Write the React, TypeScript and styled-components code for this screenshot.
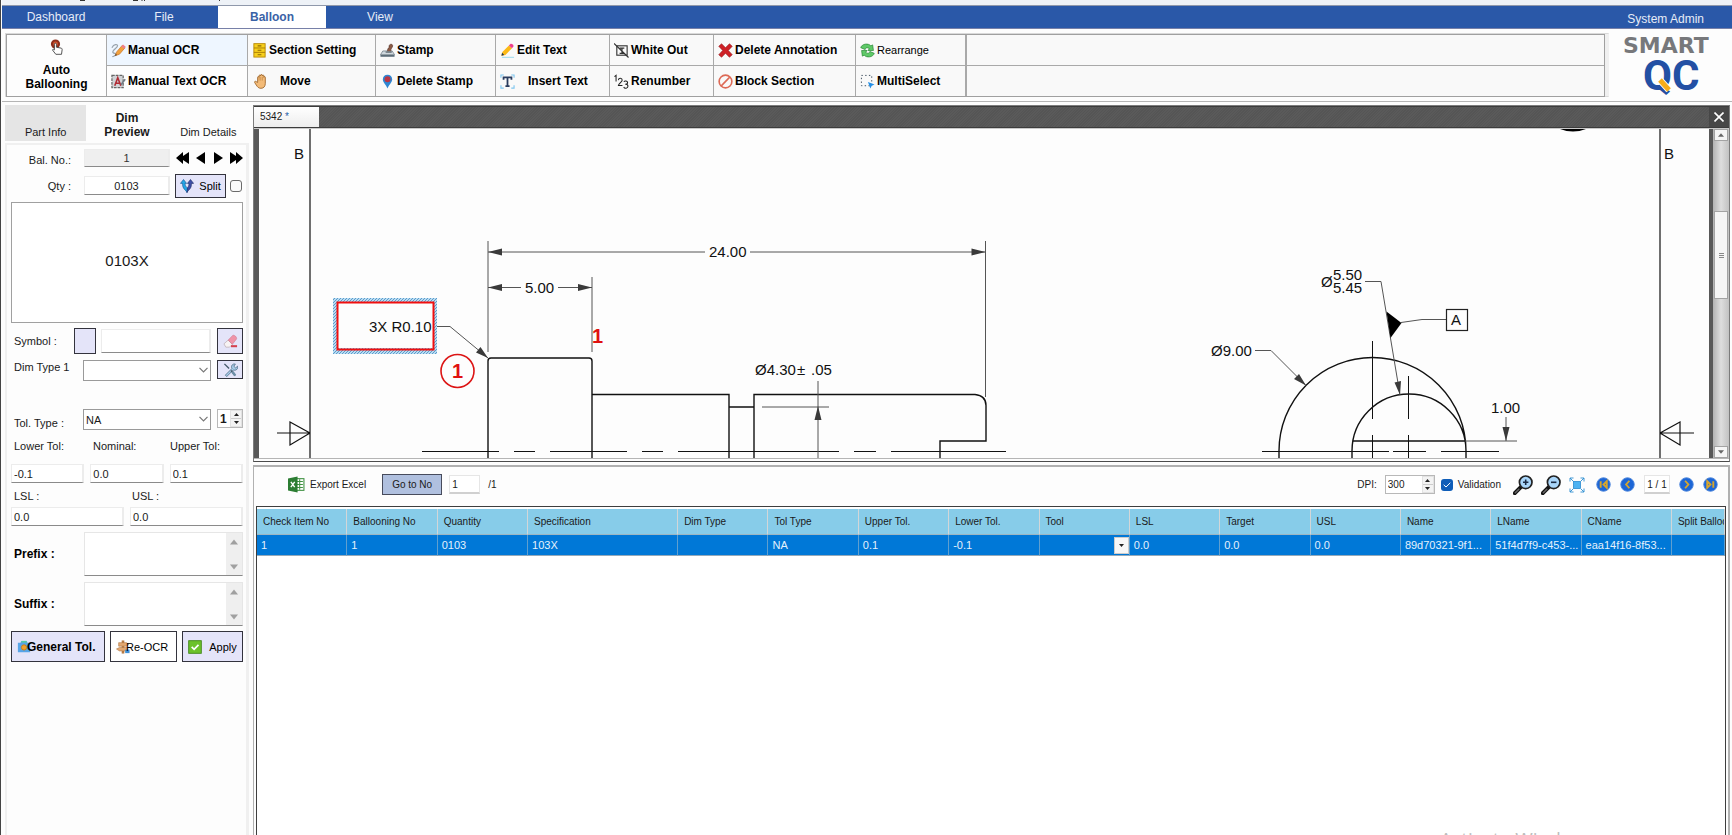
import React from 'react';
import styled, { createGlobalStyle, css } from 'styled-components';

const Global = createGlobalStyle`
  * { box-sizing: border-box; }
  body { margin: 0; background: #fff; font-family: "Liberation Sans", Arial, sans-serif; font-size: 11px; color: #1a1a1a; }
  button, input, select, textarea { font: inherit; color: inherit; margin: 0; padding: 0; border-radius: 0; }
  svg { display: block; flex: none; }
`;

const small = css`font-size: 10px;`;

/* ---------- shell ---------- */
const Page = styled.div`
  position: relative; display: flex; flex-direction: column; height: 100vh; min-height: 700px;
  overflow: hidden; border-left: 1px solid #444; padding-left: 1px; background: #fdfdfd;
`;
const TitleStrip = styled.div`height: 6px; flex: none; background: #eef2f7; border-bottom: 1px solid #8f98ab;`;
const MenuBar = styled.nav`
  display: flex; height: 23px; flex: none; background: #2a58a8; border-bottom: 1px solid #7780a8; color: #e6ecf7; font-size: 12px;
`;
const MenuTab = styled.button<{ $active?: boolean }>`
  width: 108px; border: 0; background: ${p => (p.$active ? '#fff' : 'transparent')};
  color: ${p => (p.$active ? '#3a62a6' : 'inherit')}; font-weight: ${p => (p.$active ? 700 : 400)};
`;
const UserName = styled.span`margin-left: auto; padding-right: 28px; line-height: 26px;`;

/* ---------- ribbon ---------- */
const Ribbon = styled.header`
  display: flex; flex: none; height: 73px; border-bottom: 1px solid #b5b5b5; padding: 4px 0 4px 3px; background: #fdfdfd;
`;
const RibbonFrame = styled.div`
  flex: 1; display: flex; border: 1px solid #d9d9d9; border-right-color: #f0f0f0; background: #f0f0f0; padding-right: 3px;
`;
const RibbonGrid = styled.div`
  flex: 1; display: grid; height: 63px; background: #a9a9a9; border: 1px solid #a0a0a0; gap: 1px;
  grid-template-columns: 99px 140px 127px 119px 113px 103px 141px 109px 1fr;
  grid-template-rows: 30px 30px; grid-auto-flow: column;
`;
const RibbonButton = styled.button<{ $wide?: boolean; $bg?: string; $plain?: boolean }>`
  display: flex; align-items: center; gap: ${p => (p.$wide ? '13px' : '2px')}; padding: 0 0 0 4px; border: 0;
  background: ${p => p.$bg ?? '#f9f9f9'}; color: #000; white-space: nowrap;
  font-size: ${p => (p.$plain ? '11px' : '12px')}; font-weight: ${p => (p.$plain ? 400 : 700)};
`;
const AutoButton = styled(RibbonButton)`
  grid-row: span 2; flex-direction: column; justify-content: center; padding: 0 0 2px; gap: 8px; line-height: 14px;
`;
const RibbonFiller = styled.div`background: #f9f9f9; border-left: 1px solid #a9a9a9;`;
const Brand = styled.div`width: 123px; padding-left: 10px;`;

/* ---------- workspace ---------- */
const Workspace = styled.main`flex: 1; display: flex; min-height: 0; padding-top: 3px;`;
const Side = styled.aside`width: 251px; flex: none; display: flex; flex-direction: column; padding: 0 4px 0 3px;`;
const SideTabs = styled.div`display: flex; height: 36px; flex: none;`;
const SideTab = styled.button<{ $active?: boolean; $shade?: boolean }>`
  flex: 1; min-width: 0; display: flex; align-items: flex-end; justify-content: center; padding: 0 0 2px; border: 0;
  line-height: 14px; white-space: nowrap; background: ${p => (p.$shade ? '#e5e5e5' : 'transparent')};
  font-weight: ${p => (p.$active ? 700 : 400)}; font-size: ${p => (p.$active ? '12px' : '11px')};
`;
const Form = styled.form`
  flex: 1; margin-top: 2px; padding: 4px 3px 0 4px; border: solid #f0f0f0; border-width: 2px 3px 0 2px;
`;
const Row = styled.div<{ $h: number; $top?: number; $gap?: number }>`
  display: flex; align-items: stretch; height: ${p => p.$h}px; margin-top: ${p => p.$top ?? 0}px; gap: ${p => p.$gap ?? 0}px;
`;
const Label = styled.label<{ $w?: number; $right?: boolean; $bold?: boolean; $align?: string }>`
  flex: none; width: ${p => p.$w ?? 73}px; padding: 0 ${p => (p.$right ? 13 : 0)}px 0 3px; align-self: ${p => p.$align ?? 'center'};
  text-align: ${p => (p.$right ? 'right' : 'left')}; line-height: 14px; white-space: nowrap;
  ${p => p.$bold && 'font-weight: 700; font-size: 12px; color: #000;'}
`;
const Field = styled.input<{ $w?: number; $center?: boolean }>`
  width: ${p => (p.$w ? `${p.$w}px` : 'auto')}; ${p => !p.$w && 'flex: 1; min-width: 0;'}
  height: 100%; padding: 0 2px; border: 2px solid #ececec; border-width: 1px 2px 1px 1px; border-bottom-color: #8a8a8a;
  background: #fff; text-align: ${p => (p.$center ? 'center' : 'left')};
  &:disabled { background: #efefef; color: #333; }
`;
const LavButton = styled.button<{ $w?: number; $bg?: string; $bold?: boolean; $gap?: number; $tuck?: boolean }>`
  display: flex; align-items: center; justify-content: center; gap: ${p => p.$gap ?? 0}px;
  width: ${p => (p.$w ? `${p.$w}px` : 'auto')}; flex: none; border: 1px solid #33333d; background: ${p => p.$bg ?? '#e4e4f9'};
  white-space: nowrap; color: #000; ${p => p.$bold && 'font-weight: 700; font-size: 12px;'}
  ${p => p.$tuck && 'justify-content: flex-start; padding-left: 5px; svg { margin-right: -4px; } span { position: relative; }'}
`;
const NavGroup = styled.div`flex: 1; display: flex; justify-content: space-between; align-items: center; padding-left: 6px;`;
const BareButton = styled.button`border: 0; background: none; padding: 0; display: flex;`;
const Tick = styled.input`
  appearance: none; width: 12px; height: 12px; margin: auto 1px auto auto; border: 1px solid #6b6b6b; border-radius: 3px; background: #fafafa;
`;
const Preview = styled.output`
  display: flex; align-items: center; justify-content: center; height: 121px; margin-top: 4px; border: 1px solid #a0a0a0;
  background: #fff; font-size: 15px; padding-bottom: 4px;
`;
const SelectBox = styled.div`
  position: relative; width: 128px; margin-right: 6px;
  select { appearance: none; width: 100%; height: 100%; border: 1px solid #9a9a9a; background: #fff; padding-left: 2px; }
  svg { position: absolute; right: 3px; top: 7px; pointer-events: none; }
`;
const Spinner = styled.div<{ $w: number; $bold?: boolean }>`
  display: flex; width: ${p => p.$w}px; height: 19px; border: 1px solid #b8b8b8; background: #fff;
  input { flex: 1; min-width: 0; border: 0; background: none; padding-left: 2px; ${p => p.$bold && 'font-weight: 700; font-size: 12px;'} }
`;
const Steps = styled.span`
  display: flex; flex-direction: column; gap: 1px; width: 12px; background: #ccc; border: 1px solid #e2e2e2;
  button { flex: 1; display: flex; align-items: center; justify-content: center; border: 0; background: #f3f3f3; }
`;
const Memo = styled.div`
  flex: 1; display: flex; border: 1px solid #e6e6e6; border-bottom-color: #8a8a8a; background: #fff;
  textarea { flex: 1; min-width: 0; border: 0; resize: none; background: none; overflow: hidden; }
`;
const MemoBar = styled.span`
  width: 16px; display: flex; flex-direction: column; justify-content: space-between; align-items: center; padding: 6px 0 5px; background: #efefef;
`;

const Content = styled.div`flex: 1; min-width: 0; display: flex; flex-direction: column; padding-right: 2px;`;
const Viewer = styled.section`flex: none; border: 1px solid #7c7c7c; border-bottom-color: #4c4c4c;`;
const DocBar = styled.div`
  display: flex; height: 22px; border-top: 1px solid #3c3c3c; border-bottom: 1px solid #3c3c3c;
  background: repeating-linear-gradient(135deg, #555 0 1px, #5a5a5a 1px 2px);
`;
const DocTab = styled.button`
  width: 65px; border: 0; background: linear-gradient(#fff, #ededed); padding: 0 0 1px 6px; text-align: left; ${small}
  i { font-style: normal; color: #1f5fa8; }
`;
const CloseButton = styled.button`margin-left: auto; width: 20px; display: flex; align-items: center; justify-content: center; border: 0; background: #474747;`;
const SheetRow = styled.div`display: flex; height: 331px; border-top: 1px solid #c9c9c9; border-bottom: 1px solid #b5b5b5; margin-bottom: 2px;`;
const SheetEdge = styled.div<{ $w: number }>`width: ${p => p.$w}px; flex: none; background: #585858;`;
const Sheet = styled.div`flex: 1; min-width: 0; overflow: hidden; svg { width: 100%; height: 329px; }`;
const VScroll = styled.div`
  width: 16px; flex: none; display: flex; flex-direction: column; justify-content: space-between; padding: 0 1px;
  background: linear-gradient(90deg, #b2b2b2, #dedede 50%, #c2c2c2);
`;
const ScrollPart = styled.div<{ $h: number }>`
  height: ${p => p.$h}px; display: flex; align-items: center; justify-content: center; border: 1px solid #a3a3a3; background: #f5f5f5;
`;
const ScrollTrack = styled.div`flex: 1; padding-top: 70px;`;

const Results = styled.section`flex: 1; min-height: 0; display: flex; flex-direction: column; margin-top: 3px; border: 2px solid #b1b1b1; border-width: 2px 2px 0 1px;`;
const ResultBar = styled.div`display: flex; align-items: center; height: 39px; flex: none; padding: 0 10px 4px 34px; ${small}`;
const ExportButton = styled(BareButton)`align-items: center; gap: 5px; margin-right: 16px;`;
const GoButton = styled.button`width: 60px; height: 21px; margin-right: 7px; border: 1px solid #474b5c; background: #b0c0df;`;
const SmallField = styled.input<{ $w: number; $center?: boolean }>`
  width: ${p => p.$w}px; height: 19px; padding: 0 2px; border: 1px solid #e6e6e6; border-bottom: 2px solid #d0d0d0; background: #fff;
  ${small} text-align: ${p => (p.$center ? 'center' : 'left')};
`;
const Total = styled.span`margin-left: 8px;`;
const RightTools = styled.div`margin-left: auto; display: flex; align-items: center;`;
const DpiLabel = styled.label`margin-right: 8px;`;
const Validation = styled.label`display: flex; align-items: center; gap: 5px; margin: 0 12px 0 6px;`;
const BlueTick = styled.span`
  position: relative; display: flex; width: 12px; height: 12px;
  input { appearance: none; width: 12px; height: 12px; border-radius: 3px; background: #0f5db8; }
  svg { position: absolute; left: 2px; top: 3px; pointer-events: none; }
`;
const Tools = styled.div`display: flex; align-items: center; gap: 8px;`;
const Pager = styled.div`display: flex; align-items: center; gap: 9px; margin-left: 11px;`;

const GridFrame = styled.div`
  flex: 1; min-height: 0; margin: 0 2px; border: 1px solid #3e3e3e; border-bottom: 0; padding-top: 2px; overflow: hidden; background: #fff;
`;
const Table = styled.table`
  width: 100%; table-layout: fixed; border-collapse: separate; border-spacing: 0; ${small} text-align: left;
  th, td { overflow: hidden; white-space: nowrap; text-overflow: ellipsis; padding: 0 0 0 6px; font-weight: 400; }
  th { height: 26px; background: #87cce9; border-right: 1px solid #d2d6d8; border-bottom: 1px solid #9db6c2; text-overflow: clip; }
  td { height: 21px; padding-left: 4px; background: #0078d7; color: #e4f1fc; border-right: 1px solid #5f9fcf; border-bottom: 1px solid #94a9ba; font-size: 11px; }
`;
const Col = styled.col<{ $w?: string }>`width: ${p => p.$w ?? '6.155%'};`;
const DropCell = styled.button`
  display: flex; align-items: center; justify-content: center; width: 15px; height: 17px; margin-left: auto; border: 1px solid #ccc; background: #f7f7f7;
`;
const Watermark = styled.div`
  position: absolute; right: 136px; bottom: -16px; font-family: "Open Sans", sans-serif; font-size: 19px; line-height: 24px; color: #bdbdbd; pointer-events: none;
`;

/* ---------- icons ---------- */
const Ico = ({ s = 15, children }: { s?: number; children: React.ReactNode }) => (
  <svg width={s} height={s} viewBox="0 0 16 16" fill="none" aria-hidden="true">{children}</svg>
);
const TapIcon = () => (
  <Ico s={16}>
    <circle cx="6.5" cy="5" r="4.6" fill="#8e2f1c" /><circle cx="6.5" cy="5" r="2.4" fill="#d9552f" />
    <path d="M5.4 5.2c0-1.4 2-1.4 2 0v3l4.6.9c1 .2 1.3.9 1.1 1.9l-.6 4.3H6.8L3.5 11c.2-1 1.200-.9 1.900-.1z" fill="#fff" stroke="#444" strokeWidth=".9" />
  </Ico>
);
const ScribbleIcon = () => (
  <Ico>
    <path d="M1 5c2-4 6-4 6-2S1 8 2 10s4 0 3.500 2S2 14 1.500 15" stroke="#9aa4ad" strokeWidth="1.300" />
    <path d="M4.500 13.500 6 9.500l6-7 3 2.500-6 7z" fill="#f2a13c" stroke="#c46f25" strokeWidth=".7" /><path d="m11 3.700 1.800-2.200 2.900 2.400-1.800 2.200z" fill="#ef7f8d" />
    <path d="m4.500 13.500.6-1.800 1.300 1z" fill="#333" />
  </Ico>
);
const TextScanIcon = () => (
  <Ico>
    <rect x="1" y="1.500" width="12" height="13" fill="#d0d3d6" stroke="#666" strokeWidth="1.300" strokeDasharray="3 1" />
    <path d="M4 12.500 7.200 4l3.300 8.500M5.300 9.800h4" stroke="#b02b34" strokeWidth="1.700" /><path d="m10 11 4.500-6 1.300 1-4.500 6z" fill="#707b84" />
  </Ico>
);
const CabinetIcon = () => (
  <Ico>
    <rect x="2" y=".7" width="12" height="14.300" fill="#f7cf1b" stroke="#b98b08" /><path d="M2 5.300h12M2 10h12" stroke="#a97d06" />
    <path d="M6 3h4M6 7.700h4M6 12.500h4" stroke="#8f6a05" strokeWidth="1.200" />
  </Ico>
);
const HandIcon = () => (
  <Ico>
    <path d="M4 9V3.500c0-1 1.500-1 1.500 0V2c0-1.200 1.700-1.200 1.700 0v-.6c0-1.200 1.800-1.200 1.800 0V2c0-1.100 1.700-1.100 1.700 0v1.500c0-1 1.500-1 1.500 0V10c0 3-1.500 5.300-4.700 5.300-2.500 0-3.700-1.600-5-3.600L.8 9c-.5-1 .8-1.700 1.600-.9z" transform="translate(2 0)" fill="#f3bb78" stroke="#9a6328" strokeWidth=".9" />
    <path d="M7.600 3.500V7M9.300 3v4M11.100 3v4" stroke="#b97f3d" strokeWidth=".6" />
  </Ico>
);
const StampIcon = () => (
  <Ico>
    <path d="M3 8.500h10l2.500 4H.5z" fill="#cfd8de" stroke="#6d7a84" strokeWidth=".8" />
    <path d="M8 9.500c0-3 .2-3.700 1.700-4.700C8.700 1 13.500 0 13.500 3c0 2.200-2.300 2.500-2 6.500z" fill="#8b5a45" stroke="#4c2a20" strokeWidth=".6" />
    <path d="M6 8.700h6.500v2H6z" fill="#7c868e" /><path d="M.5 13.700h15" stroke="#5c6c78" strokeWidth="2" />
  </Ico>
);
const PinIcon = () => (
  <Ico><path d="M8 .8c3 0 5 2.200 5 5C13 9 9 12 8 15.500 7 12 3 9 3 5.800c0-2.800 2-5 5-5z" fill="#2f86d2" /><circle cx="8" cy="5.600" r="3.200" fill="#b83646" /></Ico>
);
const PencilIcon = () => (
  <Ico>
    <path d="m1.500 13.500 1-4L9.500 2.700l3.300 3-7 7z" fill="#fbb917" /><path d="m9.500 2.700 1.300-1.500c1.500-1.300 4.600 1 3.300 2.900l-1.300 1.600z" fill="#ef3f8e" />
    <path d="m1.500 13.500.7-3 2.300 2.200z" fill="#1e3350" /><path d="M2 15.300h13" stroke="#a5dcee" strokeWidth="1.200" />
  </Ico>
);
const InsertTextIcon = () => (
  <Ico>
    <path d="M1 4V1h3M12 1h3v3M15 12v3h-3M4 15H1v-3" stroke="#7fc6ef" strokeWidth="1.200" />
    <path d="M3.800 6V3.500h8.400V6M8 3.500v9.300M5.800 13h4.400" stroke="#2a3c5f" strokeWidth="1.900" />
  </Ico>
);
const WhiteOutIcon = () => (
  <Ico><rect x="3" y="3" width="11" height="10" stroke="#333" strokeWidth="1.200" /><path d="M6 5.500h5M8.500 5.500V11M6 11h5M0 .5l15.500 15" stroke="#333" strokeWidth="1.300" /></Ico>
);
const NumberIcon = () => (
  <Ico s={15}>
    <path d="M.5 2.800 2.200 1.500V8M4.700 6.500C5 3.800 8.800 4 8.700 6.700 8.600 8.500 5 10 4.700 12.300H9M10.500 8.300c1-1.600 4-1 4 .8 0 1.300-1 1.900-2.500 1.900 1.700 0 2.900.7 2.900 2.100 0 2.300-3.700 2.800-4.500.8" stroke="#222" strokeWidth="1.100" />
  </Ico>
);
const CrossIcon = () => (
  <Ico><path d="m.8 3.500 3-2.700L8 5l4.200-4.200 3 2.700L11 7.900l4.200 4.600-3 2.700L8 10.900l-4.200 4.300-3-2.700L5 7.900z" fill="#cf2127" stroke="#8f1519" strokeWidth=".6" /></Ico>
);
const BlockIcon = () => <Ico><circle cx="8" cy="8" r="6.800" stroke="#dd6a56" strokeWidth="1.700" /><path d="m3.500 12.700 9-9.400" stroke="#dd6a56" strokeWidth="1.700" /></Ico>;
const RefreshIcon = () => (
  <Ico>
    <path d="M.8 5C2 .6 9 0 11.500 3l2-1 .8 6H8.500L10 6C7.500 4.300 6 5 5.500 7z" fill="#5fc968" stroke="#20802c" strokeWidth=".7" />
    <path d="M15.200 11C14 15.400 7 16 4.500 13l-2 1-.8-6h5.800L6 10c2.500 1.700 4 1 4.500-1z" fill="#5fc968" stroke="#20802c" strokeWidth=".7" />
  </Ico>
);
const MultiIcon = () => (
  <Ico><rect x="1.500" y="1.500" width="11" height="11" stroke="#3c4c5c" strokeDasharray="1.500 2.500" /><path d="m8.500 8.500 7 2.700-3 1.200L11 15.500z" fill="#2490e8" /></Ico>
);
const SplitIcon = () => (
  <Ico s={14}>
    <path d="M8 15.500C6.500 12 2.500 11.500 3 5H.5L4 .5 7.500 5H5.700c0 4 3 4.500 3 6z" fill="#24a6e6" stroke="#14538f" strokeWidth=".7" />
    <path d="M8 15.500C9.500 12 13.500 11.500 13 5h2.500L12 .5 8.500 5h1.800c0 3-1 4-1.800 5z" fill="#3d4fa8" stroke="#1c2a66" strokeWidth=".7" />
  </Ico>
);
const EraserIcon = () => (
  <Ico>
    <path d="m1 10.500 4.500-4 4.500 4.500-3 3H3z" fill="#f7f3f4" stroke="#b6a5ab" strokeWidth=".7" /><path d="M5.500 6.500 10.300 1.500c1.500-1 5.200 2 4 4L10 11z" fill="#ef93a8" stroke="#c76b80" strokeWidth=".5" /><path d="M8.500 13H15" stroke="#d5404e" strokeWidth="2.200" />
  </Ico>
);
const ToolsIcon = () => (
  <Ico>
    <path d="m2.500 14 7-7c-1.300-3 .8-5.500 3.700-4.800L11.500 4.500l2 1.800 2-1.800c.8 3-1.700 5-4.500 4l-7 7z" fill="#a8cbe8" stroke="#43627c" strokeWidth=".8" />
    <path d="m1.500 2 5 5M8.500 9l4.500 5.500" stroke="#46596a" strokeWidth="1.500" /><path d="m10 10.500 3 4" stroke="#6c8ea8" strokeWidth="2.600" />
  </Ico>
);
const Chevron = () => <svg width="9" height="6" viewBox="0 0 9 6" fill="none"><path d="m.5.8 4 4 4-4" stroke="#777" strokeWidth="1.200" /></svg>;
const Tri = ({ up, w = 5, h = 3, fill = '#222' }: { up?: boolean; w?: number; h?: number; fill?: string }) => (
  <svg width={w} height={h} viewBox="0 0 10 6"><path d={up ? 'M0 6 5 0l5 6z' : 'M0 0h10L5 6z'} fill={fill} /></svg>
);
const Arrow = ({ d, w }: { d: string; w: number }) => <svg width={w} height="12" viewBox={`0 0 ${w} 12`}><path d={d} fill="#000" /></svg>;
const BriefIcon = () => (
  <Ico s={14}><path d="M1 3h3l1-2h6l1 2h3v11H1z" fill="#57a5e8" /><path d="M5 1h6v2H5z" fill="#55c9a4" /><circle cx="8" cy="8.500" r="3" fill="#f0a22c" stroke="#c97a12" /></Ico>
);
const SignIcon = () => (
  <Ico s={14}><path d="M6.500 .5h3v15h-3z" fill="#b77b45" /><path d="M3 3h9l2.500 2L12 7H3zM13 8.500H4L.5 10.300 4 12.500h9z" fill="#e3a871" stroke="#a9703c" strokeWidth=".6" /><path d="M10.500 11h5v4h-5z" fill="#3e8fd6" /></Ico>
);
const CheckIcon = () => (
  <Ico s={14}><rect x=".8" y=".8" width="14.400" height="14.400" fill="#6cc22b" stroke="#3d8513" /><path d="m4.200 7.800 2.800 2.800 5-5" stroke="#fff" strokeWidth="2" /></Ico>
);
const ExcelIcon = () => (
  <Ico s={17}><rect x="7" y="2.500" width="8" height="11" fill="#fff" stroke="#3f9142" /><path d="M8 5.200h6M8 8h6M8 10.800h6M11 3v10" stroke="#3f9142" /><path d="M0 2.300 9 .5v15L0 13.700z" fill="#2c7d33" /><path d="m2.700 5.500 3.600 5M6.300 5.500l-3.600 5" stroke="#fff" strokeWidth="1.300" /></Ico>
);
const ZoomIcon = ({ plus }: { plus?: boolean }) => (
  <svg width="20" height="20" viewBox="0 0 20 20" fill="none">
    <path d="m1.800 18.200 6-6" stroke="#111" strokeWidth="4" strokeLinecap="round" /><path d="m2.300 17.700 3.500-3.500" stroke="#666" strokeWidth="1.500" strokeLinecap="round" />
    <circle cx="12.700" cy="7.300" r="6.300" fill="#a9d6fa" stroke="#222" strokeWidth="1.700" />
    <path d={plus ? 'M10 7.300h5.400M12.700 4.600V10' : 'M10 7.300h5.400'} stroke="#1b2b44" strokeWidth="1.600" />
  </svg>
);
const FitIcon = () => (
  <Ico s={16}><rect x="4.500" y="4.500" width="7" height="7" fill="#4db2f2" stroke="#2b8cd0" strokeWidth=".8" /><path d="M1 4.500V1h3.500M1 1l3 3M11.500 1H15v3.500M15 1l-3 3M15 11.500V15h-3.500M15 15l-3-3M4.500 15H1v-3.500M1 15l3-3" stroke="#2b8cd0" strokeWidth=".9" /></Ico>
);
const DiscIcon = ({ d }: { d: string }) => (
  <Ico s={15}><circle cx="8" cy="8" r="7.200" fill="#1d66d6" stroke="#4f88dc" /><path d={d} stroke="#d8a62c" strokeWidth="2" fill="none" /></Ico>
);

/* ---------- drawing ---------- */
const Drawing = () => (
  <svg viewBox="259 129 1451 329" preserveAspectRatio="xMinYMin slice" fill="none" fontFamily="Liberation Sans" fontSize="15">
    <defs>
      <pattern id="hatch" width="3" height="3" patternUnits="userSpaceOnUse"><rect width="3" height="3" fill="#b9dcf2" /><path d="M0 3 3 0" stroke="#5d9ccb" /></pattern>
    </defs>
    <path d="M1560 129q13 5 26 0z" fill="#000" />
    <g stroke="#111" strokeWidth="1.400">
      <path d="M310 129v329M1660 129v329M277 433h33l-20-11v23l20-12M1694 433h-34l20-11v23l-20-12" strokeWidth="1.200" />
      <path d="M488 458V361q0-3 3-3h98q3 0 3 3v97M592 394.500h137V458M729 407h25M754 458v-63.500h221q11 1 11 11V441h-46v17" />
      <path d="M1279 458v-7a93.500 93.500 0 0 1 187 0v7M1352 458v-7a57 57 0 0 1 114 0v7M1353 441h112" />
      <path d="M422 451.500h77M514 451.500h21M550 451.500h77M642 451.500h21M678 451.500h161M854 451.500h22M891 451.500h115M1262 451.500h127M1393 451.500h33M1441 451.500h58M1372.500 341v78M1372.500 435v23M1408.500 376v43M1408.500 435v23" strokeWidth="1" />
    </g>
    <g stroke="#555" strokeWidth="1">
      <path d="M488 241v111M985.500 241v156M592 277v75M488 252h217M750 252h235M488 287.500h33M558 287.500h34M434 326.500h16l38 31.500M762 407h67M818 381v77" />
      <path d="M1255 350.500h16l35 35M1365 281.500h16l19 113.500M1465 441h52M1506 417v24M1401 322.500l21-3h24" />
      <rect x="1446.500" y="309.500" width="21" height="21" stroke="#222" strokeWidth="1.200" />
    </g>
    <g fill="#3a3a3a">
      <path d="m488 252 14-3.500v7zM985.500 252l-14-3.500v7zM488 287.500l14-3.500v7zM592 287.500l-14-3.500v7zM488 358l-12-5.500 4.500-5.500zM818 406l-3.500 14h7zM1506 441l-3.500-14h7zM1306 385.500l-12-6.500 5-5zM1400 395l-5.500-12.500 6.500-1.500z" />
      <path d="m1386.500 311.500 15 11.500-11 15z" fill="#000" />
    </g>
    <path d="M333 298h104v56H333zm5 5v45h95v-45z" fill="url(#hatch)" fillRule="evenodd" />
    <rect x="337.500" y="302.500" width="96" height="47" stroke="#f10f0f" strokeWidth="2" />
    <circle cx="457.500" cy="371" r="16.500" stroke="#dc1414" strokeWidth="1.600" />
    <g fill="#e01010" fontWeight="700" fontSize="20"><text x="452" y="378">1</text><text x="592" y="343">1</text></g>
    <g fill="#111">
      <text x="294" y="159">B</text><text x="1664" y="159">B</text>
      <text x="709" y="257">24.00</text><text x="525" y="293">5.00</text><text x="369" y="332">3X R0.10</text>
      <text x="755" y="375">Ø4.30</text><text x="797" y="375">±</text><text x="811" y="375">.05</text>
      <text x="1211" y="356">Ø9.00</text><text x="1321" y="287">Ø</text>
      <text x="1333" y="280">5.50</text><text x="1333" y="293">5.45</text><text x="1451" y="325">A</text><text x="1491" y="413">1.00</text>
    </g>
  </svg>
);

const columns = ['Check Item No', 'Ballooning No', 'Quantity', 'Specification', 'Dim Type', 'Tol Type', 'Upper Tol.', 'Lower Tol.', 'Tool', 'LSL', 'Target', 'USL', 'Name', 'LName', 'CName', 'Split Balloon'];
const values = ['1', '1', '0103', '103X', '', 'NA', '0.1', '-0.1', null, '0.0', '0.0', '0.0', '89d70321-9f1...', '51f4d7f9-c453-...', 'eaa14f16-8f53...', ''];

const StepButtons = () => (
  <Steps><button type="button" aria-label="Increase"><Tri up /></button><button type="button" aria-label="Decrease"><Tri /></button></Steps>
);
const MemoField = ({ id }: { id: string }) => (
  <Memo><textarea id={id} /><MemoBar><Tri up w={8} h={6} fill="#a0a0a0" /><Tri w={8} h={6} fill="#a0a0a0" /></MemoBar></Memo>
);

export default function App() {
  return (
    <Page>
      <Global />
      <TitleStrip>
        <svg width="230" height="4" fill="none" stroke="#333"><path d="M78 .5h5M131 .5h5M140 0v1M142.500 0v1M217.500 0v1" /></svg>
      </TitleStrip>
      <MenuBar>
        <MenuTab>Dashboard</MenuTab><MenuTab>File</MenuTab><MenuTab $active>Balloon</MenuTab><MenuTab>View</MenuTab>
        <UserName>System Admin</UserName>
      </MenuBar>
      <Ribbon>
        <RibbonFrame>
          <RibbonGrid>
            <AutoButton $bg="#fdfdfd"><TapIcon /><span>Auto<br />Ballooning</span></AutoButton>
            <RibbonButton $bg="#eef6ff"><ScribbleIcon />Manual OCR</RibbonButton>
            <RibbonButton $bg="#fdfdfd"><TextScanIcon />Manual Text OCR</RibbonButton>
            <RibbonButton><CabinetIcon />Section Setting</RibbonButton>
            <RibbonButton $wide><HandIcon />Move</RibbonButton>
            <RibbonButton><StampIcon />Stamp</RibbonButton>
            <RibbonButton><PinIcon />Delete Stamp</RibbonButton>
            <RibbonButton><PencilIcon />Edit Text</RibbonButton>
            <RibbonButton $wide><InsertTextIcon />Insert Text</RibbonButton>
            <RibbonButton><WhiteOutIcon />White Out</RibbonButton>
            <RibbonButton><NumberIcon />Renumber</RibbonButton>
            <RibbonButton><CrossIcon />Delete Annotation</RibbonButton>
            <RibbonButton><BlockIcon />Block Section</RibbonButton>
            <RibbonButton $plain><RefreshIcon />Rearrange</RibbonButton>
            <RibbonButton><MultiIcon />MultiSelect</RibbonButton>
            <RibbonFiller /><RibbonFiller />
          </RibbonGrid>
        </RibbonFrame>
        <Brand>
          <svg width="106" height="66" viewBox="0 0 106 66" fontWeight="700">
            <text x="4" y="20" fontFamily="DejaVu Sans" fontSize="22" fill="#77787b">SMART</text>
            <text x="24" y="57" fontFamily="Roboto" fontSize="42" fill="#2350a4">QC</text>
            <path d="m41 47 9 10" stroke="#fff" strokeWidth="7" /><path d="m41 47 9 10" stroke="#f6ad1b" strokeWidth="5" />
          </svg>
        </Brand>
      </Ribbon>
      <Workspace>
        <Side>
          <SideTabs>
            <SideTab $shade>Part Info</SideTab><SideTab $active><span>Dim<br />Preview</span></SideTab><SideTab>Dim Details</SideTab>
          </SideTabs>
          <Form onSubmit={e => e.preventDefault()}>
            <Row $h={18}>
              <Label htmlFor="bal" $right $align="flex-end">Bal. No.:</Label><Field id="bal" $w={86} $center disabled defaultValue="1" />
              <NavGroup>
                <BareButton type="button" aria-label="First"><Arrow w={13} d="M0 6 7 0v4l6-4v12L7 8v4z" /></BareButton>
                <BareButton type="button" aria-label="Previous"><Arrow w={10} d="M0 6 9 0v12z" /></BareButton>
                <BareButton type="button" aria-label="Next"><Arrow w={10} d="M10 6 1 0v12z" /></BareButton>
                <BareButton type="button" aria-label="Last"><Arrow w={13} d="M13 6 6 0v4L0 0v12l6-4v4z" /></BareButton>
              </NavGroup>
            </Row>
            <Row $h={24} $top={7}>
              <Label htmlFor="qty" $right>Qty :</Label>
              <Row $h={19} $top={2}><Field id="qty" $w={86} $center defaultValue="0103" /></Row>
              <Row $h={24} $gap={5}>
                <span /><LavButton type="button" $w={51} $gap={5}><SplitIcon />Split</LavButton>
              </Row>
              <Tick type="checkbox" aria-label="Split on" />
            </Row>
            <Preview>0103X</Preview>
            <Row $h={26} $top={5}>
              <Label htmlFor="symbol" $w={63}>Symbol :</Label>
              <LavButton type="button" $w={22} aria-label="Pick symbol" />
              <Row $h={24} $gap={5} $top={1}><span /><Field id="symbol" $w={110} /></Row>
              <Row $h={26} $gap={6}><span /><LavButton type="button" $w={26} aria-label="Erase"><EraserIcon /></LavButton></Row>
            </Row>
            <Row $h={21} $top={6}>
              <Label htmlFor="dimtype" $w={72} $align="flex-start">Dim Type 1</Label>
              <SelectBox><select id="dimtype"><option /></select><Chevron /></SelectBox>
              <Row $h={19}><LavButton type="button" $w={26} aria-label="Settings"><ToolsIcon /></LavButton></Row>
            </Row>
            <Row $h={21} $top={28}>
              <Label htmlFor="toltype" $w={72} $align="flex-end">Tol. Type :</Label>
              <SelectBox><select id="toltype"><option>NA</option></select><Chevron /></SelectBox>
              <Spinner $w={26} $bold><input aria-label="Decimals" defaultValue="1" /><StepButtons /></Spinner>
            </Row>
            <Row $h={14} $top={9}>
              <Label htmlFor="lower" $w={79}>Lower Tol:</Label><Label htmlFor="nominal" $w={77}>Nominal:</Label><Label htmlFor="upper">Upper Tol:</Label>
            </Row>
            <Row $h={19} $top={11} $gap={6}>
              <Field id="lower" defaultValue="-0.1" /><Field id="nominal" defaultValue="0.0" /><Field id="upper" defaultValue="0.1" />
            </Row>
            <Row $h={14} $top={6}><Label htmlFor="lsl" $w={118}>LSL :</Label><Label htmlFor="usl">USL :</Label></Row>
            <Row $h={19} $top={4} $gap={6}><Field id="lsl" defaultValue="0.0" /><Field id="usl" defaultValue="0.0" /></Row>
            <Row $h={44} $top={6}><Label htmlFor="prefix" $bold>Prefix :</Label><MemoField id="prefix" /></Row>
            <Row $h={44} $top={6}><Label htmlFor="suffix" $bold>Suffix :</Label><MemoField id="suffix" /></Row>
            <Row $h={31} $top={5} $gap={5}>
              <LavButton type="button" $w={94} $bold $tuck><BriefIcon /><span>General Tol.</span></LavButton>
              <LavButton type="button" $w={67} $bg="#fff" $tuck><SignIcon /><span>Re-OCR</span></LavButton>
              <LavButton type="button" $w={61} $gap={7}><CheckIcon />Apply</LavButton>
            </Row>
          </Form>
        </Side>
        <Content>
          <Viewer>
            <DocBar>
              <DocTab>5342 <i>*</i></DocTab>
              <CloseButton aria-label="Close"><svg width="10" height="10" viewBox="0 0 10 10"><path d="m.5.5 9 9m0-9-9 9" stroke="#fff" strokeWidth="1.600" /></svg></CloseButton>
            </DocBar>
            <SheetRow>
              <SheetEdge $w={5} /><Sheet><Drawing /></Sheet><SheetEdge $w={4} />
              <VScroll>
                <ScrollPart $h={12}><Tri up w={6} h={4} fill="#666" /></ScrollPart>
                <ScrollTrack><ScrollPart $h={88}><svg width="5" height="5"><path d="M0 .5h5M0 2.500h5M0 4.500h5" stroke="#888" /></svg></ScrollPart></ScrollTrack>
                <ScrollPart $h={12}><Tri w={6} h={4} fill="#666" /></ScrollPart>
              </VScroll>
            </SheetRow>
          </Viewer>
          <Results>
            <ResultBar>
              <ExportButton><ExcelIcon />Export Excel</ExportButton>
              <GoButton>Go to No</GoButton>
              <SmallField $w={31} aria-label="Go to number" defaultValue="1" /><Total>/1</Total>
              <RightTools>
                <DpiLabel htmlFor="dpi">DPI:</DpiLabel>
                <Spinner $w={50}><input id="dpi" defaultValue="300" /><StepButtons /></Spinner>
                <Validation>
                  <BlueTick><input type="checkbox" defaultChecked /><svg width="8" height="6" viewBox="0 0 8 6" fill="none"><path d="m.7 2.800 2.300 2.200L7.300.8" stroke="#fff" /></svg></BlueTick>
                  Validation
                </Validation>
                <Tools>
                  <BareButton aria-label="Zoom in"><ZoomIcon plus /></BareButton>
                  <BareButton aria-label="Zoom out"><ZoomIcon /></BareButton>
                  <BareButton aria-label="Fit"><FitIcon /></BareButton>
                </Tools>
                <Pager>
                  <BareButton aria-label="First page"><DiscIcon d="M5 4.500v7M11.500 4.500 8 8l3.500 3.500z" /></BareButton>
                  <BareButton aria-label="Previous page"><DiscIcon d="M10 4 6.500 8l3.500 4" /></BareButton>
                  <SmallField $w={26} $center aria-label="Page" defaultValue="1 / 1" />
                  <BareButton aria-label="Next page"><DiscIcon d="M6.500 4 10 8l-3.500 4" /></BareButton>
                  <BareButton aria-label="Last page"><DiscIcon d="M11 4.500v7M4.500 4.500 8 8l-3.500 3.500z" /></BareButton>
                </Pager>
              </RightTools>
            </ResultBar>
            <GridFrame>
              <Table>
                <colgroup>{columns.map((c, i) => <Col key={c} $w={i === 3 ? '10.225%' : i === 15 ? 'auto' : undefined} />)}</colgroup>
                <thead><tr>{columns.map(c => <th key={c}>{c}</th>)}</tr></thead>
                <tbody><tr>{values.map((v, i) => <td key={columns[i]}>{v === null ? <DropCell aria-label="Choose tool"><Tri /></DropCell> : v}</td>)}</tr></tbody>
              </Table>
            </GridFrame>
          </Results>
        </Content>
      </Workspace>
      <Watermark>Activate Windows</Watermark>
    </Page>
  );
}
